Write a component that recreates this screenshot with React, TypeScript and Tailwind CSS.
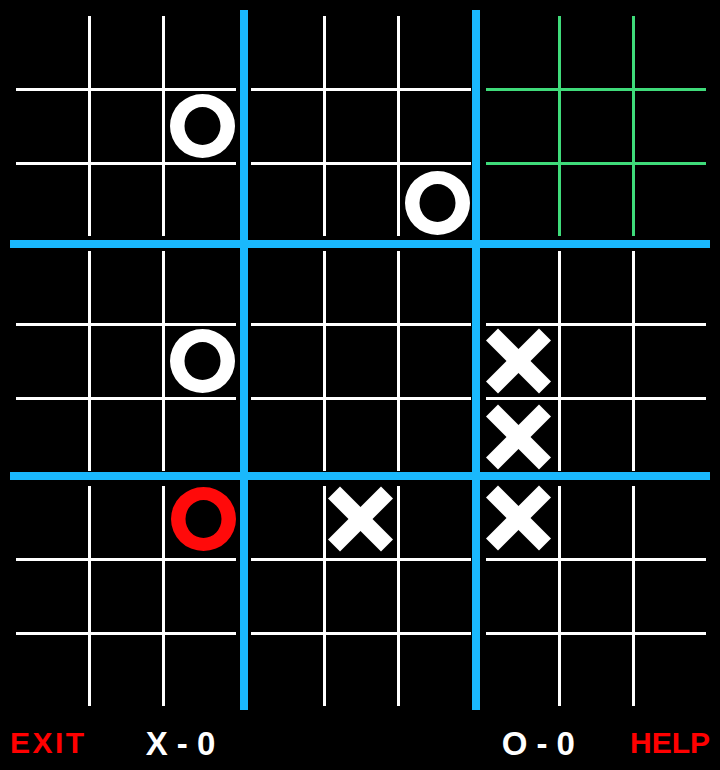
type MarkKind = "X" | "O" | "R";

type Mark = { kind: MarkKind; nudge: string } | null;

type Board = {
  lines: "white" | "green";
  cells: Mark[];
};

const empty = (): Mark[] => [null, null, null, null, null, null, null, null, null];

const withMarks = (marks: Record<number, Mark>): Mark[] => {
  const cells = empty();
  Object.entries(marks).forEach(([idx, mark]) => {
    cells[Number(idx)] = mark;
  });
  return cells;
};

const BOARDS: Board[] = [
  { lines: "white", cells: withMarks({ 5: { kind: "O", nudge: "translate-x-[2px] -translate-y-[1px]" } }) },
  { lines: "white", cells: withMarks({ 8: { kind: "O", nudge: "translate-x-[2px] translate-y-[2px]" } }) },
  { lines: "green", cells: empty() },
  { lines: "white", cells: withMarks({ 5: { kind: "O", nudge: "translate-x-[2px] -translate-y-[1px]" } }) },
  { lines: "white", cells: empty() },
  {
    lines: "white",
    cells: withMarks({
      3: { kind: "X", nudge: "-translate-x-[4px] -translate-y-[1px]" },
      6: { kind: "X", nudge: "-translate-x-[4px] translate-y-[1px]" },
    }),
  },
  { lines: "white", cells: withMarks({ 2: { kind: "R", nudge: "translate-x-[3px] -translate-y-[3px]" } }) },
  { lines: "white", cells: withMarks({ 1: { kind: "X", nudge: "-translate-x-[1px] -translate-y-[3px]" } }) },
  { lines: "white", cells: withMarks({ 0: { kind: "X", nudge: "-translate-x-[4px] -translate-y-[4px]" } }) },
];

// padding of each small board inside its slot of the big grid
const slotPad = [
  "pl-[6px] pt-[6px]",
  "pl-[3px] pt-[6px]",
  "pl-[6px] pt-[6px]",
  "pl-[6px] pt-[3px]",
  "pl-[3px] pt-[3px]",
  "pl-[6px] pt-[3px]",
  "pl-[6px] pt-[6px]",
  "pl-[3px] pt-[6px]",
  "pl-[6px] pt-[6px]",
];

function RingMark({ red }: { red?: boolean }) {
  return (
    <svg width="65" height="64" viewBox="0 0 65 64" className="block">
      <path
        fillRule="evenodd"
        fill={red ? "#ff0a0a" : "#ffffff"}
        d="M32.5 0 A32.5 32 0 1 1 32.5 64 A32.5 32 0 1 1 32.5 0 Z M32.5 13 A18 19 0 1 0 32.5 51 A18 19 0 1 0 32.5 13 Z"
      />
    </svg>
  );
}

function CrossMark() {
  return (
    <svg width="65" height="66" viewBox="0 0 65 66" className="block">
      <g stroke="#ffffff" strokeWidth="17" strokeLinecap="butt">
        <line x1="6" y1="6.5" x2="59" y2="59.5" />
        <line x1="59" y1="6.5" x2="6" y2="59.5" />
      </g>
    </svg>
  );
}

function SmallBoard({ board }: { board: Board }) {
  return (
    <div
      className={`grid h-[220px] w-[220px] grid-cols-[72px_71px_71px] grid-rows-[72px_71px_71px] gap-[3px] ${
        board.lines === "green" ? "bg-[#3fdb7a]" : "bg-white"
      }`}
    >
      {board.cells.map((mark, i) => (
        <div key={i} className="flex items-center justify-center bg-black">
          {mark ? (
            <div className={mark.nudge}>
              {mark.kind === "X" ? <CrossMark /> : <RingMark red={mark.kind === "R"} />}
            </div>
          ) : null}
        </div>
      ))}
    </div>
  );
}

export default function App() {
  return (
    <div className="min-h-screen w-full bg-black font-['Liberation_Sans',Arial,sans-serif] font-bold">
      <div className="pl-[10px] pt-[10px]">
        <div className="grid w-[700px] grid-cols-[230px_224px_230px] grid-rows-[230px_224px_230px] gap-[8px] bg-[#1ab8fd]">
          {BOARDS.map((board, i) => (
            <div key={i} className={`bg-black ${slotPad[i]}`}>
              <SmallBoard board={board} />
            </div>
          ))}
        </div>
      </div>

      <div className="flex h-[60px] items-center justify-between px-[10px] pt-[6px]">
        <div className="flex items-center gap-[59px]">
          <span className="text-[30px] leading-none tracking-[2.5px] text-[#ff0000]">EXIT</span>
          <span className="text-[33px] leading-none text-white">X - 0</span>
        </div>
        <div className="flex items-center gap-[55px]">
          <span className="text-[33px] leading-none text-white">O - 0</span>
          <span className="text-[30px] leading-none text-[#ff0000]">HELP</span>
        </div>
      </div>
    </div>
  );
}
